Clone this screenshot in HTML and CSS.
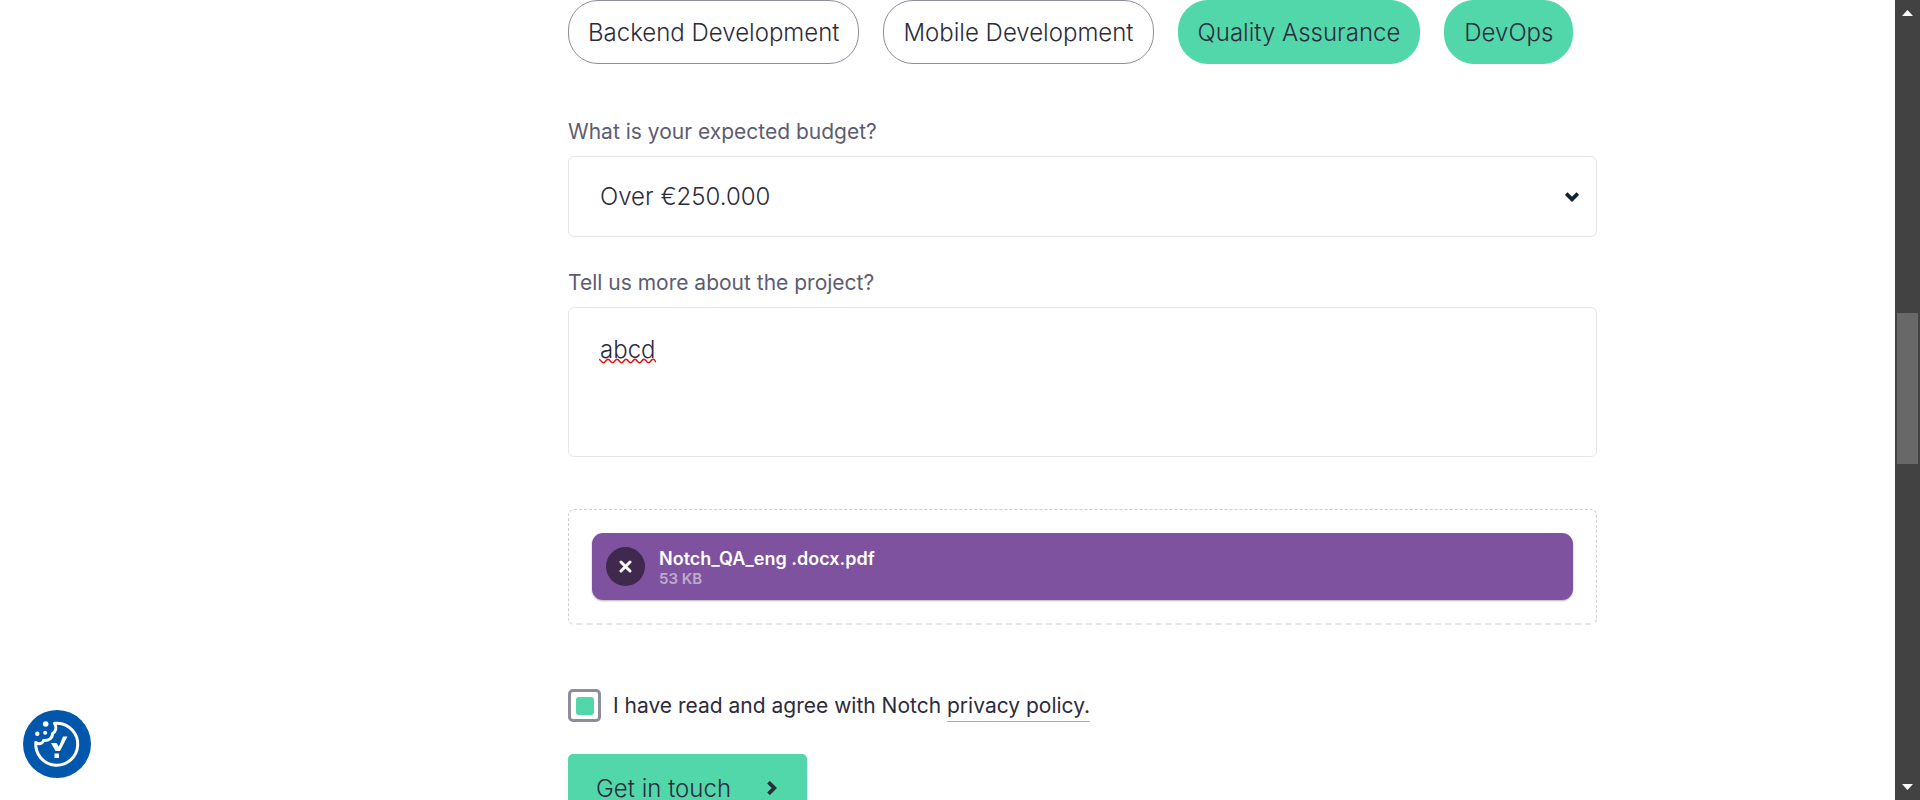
FILE: index.html
```html
<!DOCTYPE html>
<html lang="en">
<head>
<meta charset="utf-8">
<meta name="viewport" content="width=device-width, initial-scale=1">
<title>Get in touch</title>
<link rel="stylesheet" href="styles.css">
</head>
<body>
<div class="viewport">
  <main class="page">
    <form class="form">
      <div class="chips">
        <button type="button" class="chip" aria-pressed="false">Backend Development</button>
        <button type="button" class="chip" aria-pressed="false">Mobile Development</button>
        <button type="button" class="chip chip-on" aria-pressed="true">Quality Assurance</button>
        <button type="button" class="chip chip-on" aria-pressed="true">DevOps</button>
      </div>

      <label class="label" for="budget">What is your expected budget?</label>
      <div class="field">
        <select class="control select" id="budget">
          <option selected>Over €250.000</option>
        </select>
        <svg class="chevron" width="14" height="10" viewBox="0 0 14 10" aria-hidden="true"><path d="M1.200 1.500 7 7.300l5.800-5.800" fill="none" stroke="#10232f" stroke-width="3.800"/></svg>
      </div>

      <label class="label" for="about">Tell us more about the project?</label>
      <div class="field">
        <textarea class="control textarea" id="about" spellcheck="false">abcd</textarea>
        <svg class="squiggle" width="57" height="6" viewBox="0 0 57 6" aria-hidden="true"><path d="M0 1.500C2 1.500 2.500 4.800 4.500 4.800S7 1.200 9 1.200s2.500 3.600 4.500 3.600S16 1.200 18 1.200s2.500 3.600 4.500 3.600S25 1.200 27 1.200s2.500 3.600 4.500 3.600S34 1.200 36 1.200s2.500 3.600 4.500 3.600S43 1.200 45 1.200s2.500 3.600 4.500 3.600S52 1.200 54 1.200s2 1.500 3 3" fill="none" stroke="#f00d0d" stroke-width="1.400"/></svg>
      </div>

      <div class="drop">
        <div class="file">
          <button type="button" class="remove" aria-label="Remove file">
            <svg width="13" height="13" viewBox="0 0 13 13" aria-hidden="true"><path d="m2 2 9 9m0-9-9 9" fill="none" stroke="#fff" stroke-width="3" stroke-linecap="round"/></svg>
          </button>
          <div class="file-info">
            <span class="file-name">Notch_QA_eng .docx.pdf</span>
            <span class="file-size">53 KB</span>
          </div>
        </div>
      </div>

      <div class="consent">
        <input class="check" type="checkbox" id="agree" checked>
        <label for="agree">I have read and agree with Notch <a class="link" href="#privacy">privacy policy.</a></label>
      </div>

      <button type="submit" class="submit">Get in touch
        <svg width="10" height="14" viewBox="0 0 10 14" aria-hidden="true"><path d="m1.500 1.200 5.800 5.800-5.800 5.800" fill="none" stroke="#2c2b3c" stroke-width="3.800"/></svg>
      </button>
    </form>
  </main>

  <div class="scrollbar" aria-hidden="true">
    <svg class="arrow" width="11" height="6" viewBox="0 0 11 6"><path d="M0 6 5.500 0 11 6z" fill="#fff"/></svg>
    <div class="track"><div class="thumb"></div></div>
    <svg class="arrow" width="11" height="6" viewBox="0 0 11 6"><path d="M0 0h11L5.500 6z" fill="#fff"/></svg>
  </div>
</div>

<button type="button" class="cookie" aria-label="Cookie settings">
  <svg width="68" height="68" viewBox="0 0 68 68" aria-hidden="true">
    <circle cx="34" cy="34" r="34" fill="#0057ab"/>
    <path d="M34.500 13.200A21 21 0 1 1 12.800 32.500C17 35 20 33 20.500 30.500C26 31 29.500 28 29.500 23.500C33 21.500 34 17.500 31.500 13.200Z" fill="none" stroke="#fff" stroke-width="3" stroke-linejoin="round"/>
    <circle cx="22.700" cy="14" r="2.800" fill="#fff"/>
    <circle cx="14.300" cy="23.800" r="2.200" fill="#fff"/>
    <circle cx="22.200" cy="22.700" r="2" fill="#fff"/>
    <path d="M28 33h5.500l2.300 3.800L40 26.500h4.500L37 41h-4.500zM31.500 43.500h4.500v4.500h-4.500z" fill="#fff"/>
  </svg>
</button>
</body>
</html>
```
FILE: styles.css
```css
* { box-sizing: border-box; }

body {
  margin: 0;
  background: #fff;
  color: #2c2b3c;
  font-family: Inter, "Liberation Sans", sans-serif;
  font-weight: 300;
}

button, select, textarea {
  font: inherit;
  color: inherit;
}

.viewport {
  display: flex;
  height: 100vh;
  overflow: hidden;
}

.page {
  flex: 1;
  min-width: 0;
}

.form {
  display: flex;
  flex-direction: column;
  max-width: 1299px;
  margin: 0 auto;
  padding-left: 270px;
}

.chips {
  display: flex;
  flex-wrap: wrap;
  gap: 24px;
  margin-bottom: 52px;
}

.chip {
  height: 64px;
  padding: 0 19px;
  border: 1px solid #8f8c9b;
  border-radius: 30px;
  background: #fff;
  font-size: 24px;
  white-space: nowrap;
}

.chip-on {
  border-color: #52d7ab;
  background: #52d7ab;
}

.label {
  margin-bottom: 8px;
  color: #5d5c72;
  font-size: 21px;
  font-weight: 400;
  line-height: 32px;
}

.field {
  position: relative;
  display: flex;
  margin-bottom: 30px;
}

.control {
  width: 100%;
  border: 1px solid #e6e6e6;
  border-radius: 6px;
  background: #fff;
  font-size: 24px;
  line-height: 32px;
}

.select {
  height: 81px;
  padding: 0 31px;
  appearance: none;
}

.textarea {
  height: 150px;
  padding: 26px 31px;
  resize: none;
}

.chevron {
  position: absolute;
  top: 36px;
  right: 18px;
  pointer-events: none;
}

.squiggle {
  position: absolute;
  top: 51px;
  left: 31px;
  pointer-events: none;
}

.drop {
  margin: 22px 0 64px;
  padding: 23px;
  border: 1px dashed #cfcfcf;
  border-bottom: 2px dashed #e6e6e6;
  border-radius: 6px;
}

.file {
  display: flex;
  align-items: center;
  gap: 14px;
  height: 67px;
  padding: 0 14px;
  border-radius: 11px;
  background: #7e529f;
  box-shadow: 0 1px 2px rgba(0, 0, 0, 0.3);
}

.remove {
  display: grid;
  place-items: center;
  width: 39px;
  height: 39px;
  padding: 0;
  border: 0;
  border-radius: 50%;
  background: #3f294f;
}

.file-info {
  display: flex;
  flex-direction: column;
  padding-top: 3px;
  color: #fff;
  font-weight: 600;
}

.file-name {
  font-size: 18px;
  line-height: 21px;
}

.file-size {
  font-size: 15px;
  line-height: 20px;
  opacity: 0.5;
}

.consent {
  display: flex;
  align-items: center;
  gap: 12px;
  margin-bottom: 32px;
  font-size: 21px;
  font-weight: 400;
}

.check {
  display: grid;
  place-items: center;
  width: 33px;
  height: 33px;
  margin: 0;
  border: 3px solid #8f8c9b;
  border-radius: 5px;
  appearance: none;
}

.check:checked::before {
  content: "";
  width: 18px;
  height: 18px;
  border-radius: 3px;
  background: #52d7ab;
}

.link {
  padding-bottom: 3px;
  border-bottom: 1px solid #52d7ab;
  color: inherit;
  text-decoration: none;
}

.submit {
  display: flex;
  align-items: center;
  align-self: flex-start;
  gap: 36px;
  height: 68px;
  padding: 0 30px 0 28px;
  border: 0;
  border-radius: 5px;
  background: #52d7ab;
  font-size: 24px;
}

.scrollbar {
  display: flex;
  flex-direction: column;
  align-items: center;
  width: 25px;
  padding: 10px 0;
  background: #424242;
}

.track {
  display: grid;
  flex: 1;
  grid-template-rows: 297fr 151fr 320fr;
  width: 21px;
}

.thumb {
  grid-row: 2;
  background: #686868;
}

.cookie {
  position: fixed;
  bottom: 22px;
  left: 23px;
  padding: 0;
  border: 0;
  border-radius: 50%;
  background: none;
  line-height: 0;
}
```
